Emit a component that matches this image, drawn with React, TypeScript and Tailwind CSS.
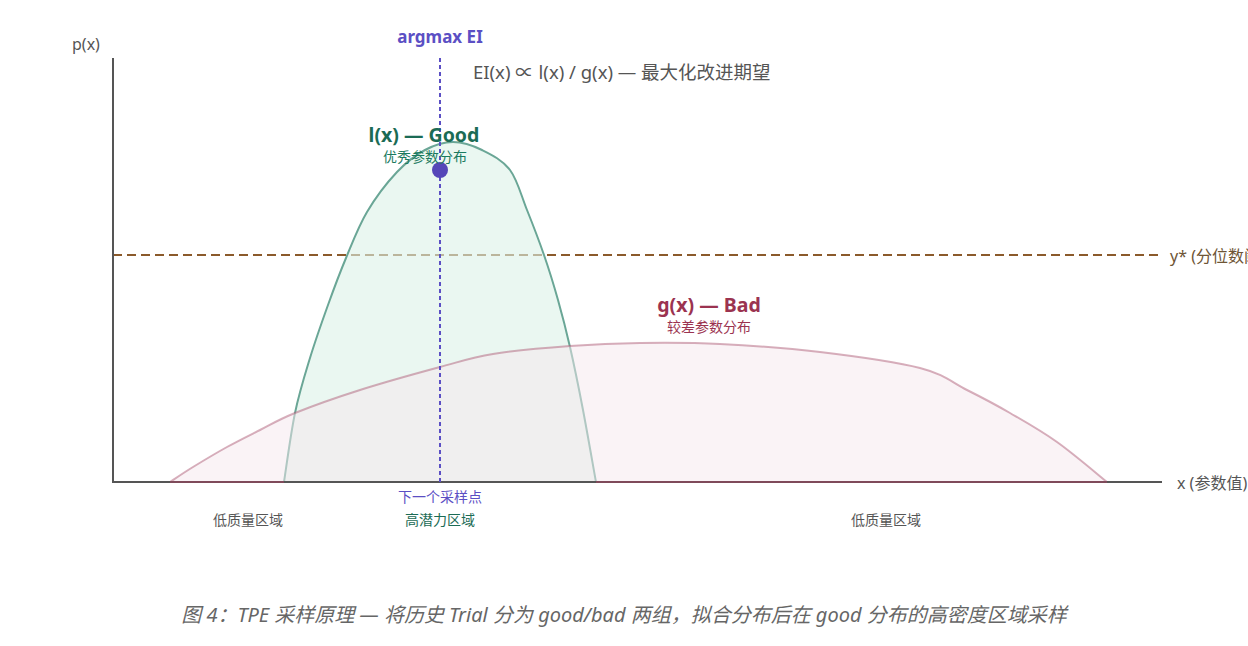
import React from "react";

type Pt = [number, number];

const goodPts: Pt[] = [
  [284, 482], [295, 413], [310, 358], [328, 305], [346, 258], [367, 212],
  [397, 172], [425, 150], [453, 142], [482, 150], [510, 170], [527, 210],
  [544, 255], [558, 300], [570, 347], [583, 410], [596, 482],
];

const badPts: Pt[] = [
  [170, 482], [193, 467], [227, 447], [260, 430], [295, 413], [360, 390],
  [440, 367], [493, 354], [570, 346], [640, 343], [720, 344], [820, 352],
  [920, 368], [967, 390], [1010, 413], [1057, 442], [1107, 482],
];

// catmull-rom through the sample points, so the densities look smooth
const smooth = (pts: Pt[], close = false) => {
  let d = `M${pts[0][0]} ${pts[0][1]}`;
  for (let i = 0; i < pts.length - 1; i++) {
    const p0 = pts[i - 1] ?? pts[i];
    const p1 = pts[i];
    const p2 = pts[i + 1];
    const p3 = pts[i + 2] ?? p2;
    const c1x = p1[0] + (p2[0] - p0[0]) / 6;
    const c1y = p1[1] + (p2[1] - p0[1]) / 6;
    const c2x = p2[0] - (p3[0] - p1[0]) / 6;
    const c2y = p2[1] - (p3[1] - p1[1]) / 6;
    d += ` C${c1x.toFixed(1)} ${c1y.toFixed(1)} ${c2x.toFixed(1)} ${c2y.toFixed(1)} ${p2[0]} ${p2[1]}`;
  }
  return close ? d + " Z" : d;
};

const TpeChart = () => {
  return (
    <svg
      width={1248}
      height={601}
      viewBox="0 0 1248 601"
      className="block font-['Noto_Sans','Noto_Sans_CJK_SC',sans-serif]"
    >
      {/* y* threshold */}
      <line x1={113} y1={255} x2={1162} y2={255} stroke="#8b5a2b" strokeWidth={2} strokeDasharray="9 5" />

      {/* l(x) good */}
      <path d={smooth(goodPts, true)} fill="#dcf2e8" fillOpacity={0.6} stroke="none" />
      <path d={smooth(goodPts)} fill="none" stroke="#6aa696" strokeWidth={2} />

      {/* g(x) bad */}
      <path d={smooth(badPts, true)} fill="#f5e7ed" fillOpacity={0.5} stroke="none" />
      <path d={smooth(badPts)} fill="none" stroke="#b0607a" strokeOpacity={0.5} strokeWidth={2} />

      {/* axes */}
      <line x1={113} y1={58} x2={113} y2={482} stroke="#555" strokeWidth={2} />
      <line x1={112} y1={482} x2={1162} y2={482} stroke="#555" strokeWidth={2} />
      <line x1={170} y1={482} x2={284} y2={482} stroke="#7f4a5a" strokeWidth={2} />
      <line x1={596} y1={482} x2={1107} y2={482} stroke="#7f4a5a" strokeWidth={2} />

      {/* argmax line */}
      <line x1={440} y1={58} x2={440} y2={482} stroke="#5b4fc4" strokeWidth={2} strokeDasharray="4 3" />
      <circle cx={440} cy={170} r={8} fill="#5546b8" />

      <text x={72} y={50} fontSize={16} fill="#555">p(x)</text>
      <text x={440} y={43} fontSize={17} fontWeight={700} fill="#5b4fc4" textAnchor="middle">argmax EI</text>
      <text x={473} y={79} fontSize={18.5} fill="#555">EI(x) ∝ l(x) / g(x) — 最大化改进期望</text>

      <text x={424} y={142} fontSize={19.5} fontWeight={700} fill="#1b6b55" textAnchor="middle">l(x) — Good</text>
      <text x={425} y={162} fontSize={14} fill="#1b7a5f" textAnchor="middle">优秀参数分布</text>

      <text x={709} y={312} fontSize={19.5} fontWeight={700} fill="#9b3350" textAnchor="middle">g(x) — Bad</text>
      <text x={709} y={332} fontSize={14} fill="#9b3350" textAnchor="middle">较差参数分布</text>

      <text x={1170} y={262} fontSize={16} fill="#6e5535">y* (分位数阈值)</text>
      <text x={1177} y={489} fontSize={16} fill="#555">x (参数值)</text>

      <text x={440} y={502} fontSize={14} fill="#5b4fc4" textAnchor="middle">下一个采样点</text>
      <text x={440} y={525} fontSize={14} fill="#1b6b55" textAnchor="middle">高潜力区域</text>
      <text x={248} y={525} fontSize={14} fill="#555" textAnchor="middle">低质量区域</text>
      <text x={886} y={525} fontSize={14} fill="#555" textAnchor="middle">低质量区域</text>
    </svg>
  );
};

export default function App() {
  return (
    <div className="w-[1248px] h-[646px] overflow-hidden bg-white">
      <TpeChart />
      <p className="text-center italic text-[20px] leading-[28px] text-[#666] font-['Noto_Sans','Noto_Sans_CJK_SC',sans-serif]">
        图 4：TPE 采样原理 — 将历史 Trial 分为 good/bad 两组，拟合分布后在 good 分布的高密度区域采样
      </p>
    </div>
  );
}
